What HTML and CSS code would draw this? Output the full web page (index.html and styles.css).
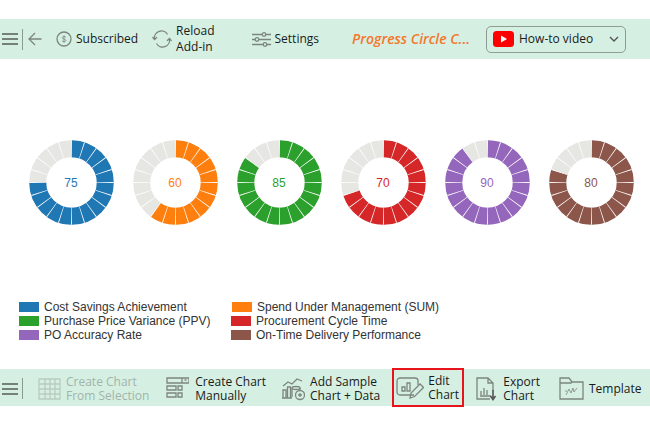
FILE: index.html
```html
<!doctype html>
<html>
    <head>
        <meta charset="utf-8"/>
        <title>Progress Circle Chart</title>
        <link rel="stylesheet" href="styles.css">
    </head>
    <body>
        <header class="bar top-bar">
            <svg class="ico menu-ico" width="16" height="14" viewBox="0 0 16 14"><path d="M0 2h16M0 7h16M0 12h16"/></svg>
            <span class="divider"></span>
            <svg class="ico back-ico" width="14" height="14" viewBox="0 0 14 14"><path d="M13.500 7H1M7 1L1 7l6 6"/></svg>
            <div class="tool subscribed">
                <svg class="ico" width="16" height="16" viewBox="0 0 16 16"><circle cx="8" cy="8" r="7"/><path class="thin" d="M10 6.200C9.500 5.300 6.200 5.200 6.200 6.700S10 8 10 9.500 6.500 11 6 9.800M8 4.300v7.400"/></svg>
                <span>Subscribed</span>
            </div>
            <div class="tool reload">
                <svg class="ico" width="20" height="18" viewBox="0 0 20 18"><path d="M2.500 9A7 7 0 0 1 15.500 4.500M17.500 9A7 7 0 0 1 4.500 13.500"/><path d="M0.500 7l2 2.500L5 7.200M19.500 11l-2-2.500L15 10.800"/></svg>
                <span>Reload<br>Add-in</span>
            </div>
            <div class="tool settings">
                <svg class="ico" width="19" height="15" viewBox="0 0 19 15"><path d="M0 2.500h10M14 2.500h5M0 7.500h3M7 7.500h12M0 12.500h11M15 12.500h4"/><circle cx="12" cy="2.500" r="1.800"/><circle cx="5" cy="7.500" r="1.800"/><circle cx="13" cy="12.500" r="1.800"/></svg>
                <span>Settings</span>
            </div>
            <p class="addin-title">Progress Circle C...</p>
            <div class="video-select">
                <svg width="21" height="16" viewBox="0 0 21 16"><rect width="21" height="16" rx="3.500" fill="#f00"/><path d="M8 4.500v7l6-3.500z" fill="#fff"/></svg>
                <span>How-to video</span>
                <svg class="ico chevron" width="10" height="6" viewBox="0 0 10 6"><path d="M1 1l4 4 4-4"/></svg>
            </div>
        </header>

        <main>
            <section class="charts">
                <figure class="donut blue">
                    <svg viewBox="0 0 85 85"><circle class="track" cx="42.500" cy="42.500" r="33.750" pathLength="100"/><circle class="value" cx="42.500" cy="42.500" r="33.750" pathLength="100" stroke-dasharray="75 25"/><circle class="seps" cx="42.500" cy="42.500" r="33.750" pathLength="100"/></svg>
                    <figcaption>75</figcaption>
                </figure>
                <figure class="donut orange">
                    <svg viewBox="0 0 85 85"><circle class="track" cx="42.500" cy="42.500" r="33.750" pathLength="100"/><circle class="value" cx="42.500" cy="42.500" r="33.750" pathLength="100" stroke-dasharray="60 40"/><circle class="seps" cx="42.500" cy="42.500" r="33.750" pathLength="100"/></svg>
                    <figcaption>60</figcaption>
                </figure>
                <figure class="donut green">
                    <svg viewBox="0 0 85 85"><circle class="track" cx="42.500" cy="42.500" r="33.750" pathLength="100"/><circle class="value" cx="42.500" cy="42.500" r="33.750" pathLength="100" stroke-dasharray="85 15"/><circle class="seps" cx="42.500" cy="42.500" r="33.750" pathLength="100"/></svg>
                    <figcaption>85</figcaption>
                </figure>
                <figure class="donut red">
                    <svg viewBox="0 0 85 85"><circle class="track" cx="42.500" cy="42.500" r="33.750" pathLength="100"/><circle class="value" cx="42.500" cy="42.500" r="33.750" pathLength="100" stroke-dasharray="70 30"/><circle class="seps" cx="42.500" cy="42.500" r="33.750" pathLength="100"/></svg>
                    <figcaption>70</figcaption>
                </figure>
                <figure class="donut purple">
                    <svg viewBox="0 0 85 85"><circle class="track" cx="42.500" cy="42.500" r="33.750" pathLength="100"/><circle class="value" cx="42.500" cy="42.500" r="33.750" pathLength="100" stroke-dasharray="90 10"/><circle class="seps" cx="42.500" cy="42.500" r="33.750" pathLength="100"/></svg>
                    <figcaption>90</figcaption>
                </figure>
                <figure class="donut brown">
                    <svg viewBox="0 0 85 85"><circle class="track" cx="42.500" cy="42.500" r="33.750" pathLength="100"/><circle class="value" cx="42.500" cy="42.500" r="33.750" pathLength="100" stroke-dasharray="80 20"/><circle class="seps" cx="42.500" cy="42.500" r="33.750" pathLength="100"/></svg>
                    <figcaption>80</figcaption>
                </figure>
            </section>

            <ul class="legend">
                <li class="blue"><i></i>Cost Savings Achievement</li>
                <li class="orange nudge"><i></i>Spend Under Management (SUM)</li>
                <li class="green"><i></i>Purchase Price Variance (PPV)</li>
                <li class="red"><i></i>Procurement Cycle Time</li>
                <li class="purple"><i></i>PO Accuracy Rate</li>
                <li class="brown"><i></i>On-Time Delivery Performance</li>
            </ul>
        </main>

        <footer class="bar bottom-bar">
            <svg class="ico menu-ico" width="16" height="14" viewBox="0 0 16 14"><path d="M0 2h16M0 7h16M0 12h16"/></svg>
            <span class="divider"></span>
            <div class="tool from-selection disabled">
                <svg class="ico" width="23" height="24" viewBox="0 0 23 24"><path d="M1 2h21v20H1zM1 7h21M1 12h21M1 17h21M7 2v20M12 2v20M17 2v20"/></svg>
                <span>Create Chart<br>From Selection</span>
            </div>
            <div class="tool manually">
                <svg class="ico" width="23" height="24" viewBox="0 0 23 24"><path d="M1 1h22v5H1zM16 1v5M18.500 3h2M1 9h9v4H1zM1 16h9v4H1zM12 9h4v4h-4zM12 16h4v4h-4z"/></svg>
                <span>Create Chart<br>Manually</span>
            </div>
            <div class="tool sample">
                <svg class="ico" width="24" height="24" viewBox="0 0 24 24"><path d="M2 9l5-4 4 2 5-5 5 2M1 21h10M2 13h3v8H2zM6.500 10h3v11h-3z"/><ellipse cx="15" cy="11" rx="4" ry="1.500"/><path d="M11 11v9M19 11v2"/><circle cx="19" cy="18" r="4.500"/><path d="M17 18h4M19 16v4"/></svg>
                <span>Add Sample<br>Chart + Data</span>
            </div>
            <div class="tool edit-chart">
                <svg class="ico" width="28" height="24" viewBox="0 0 28 24"><path d="M18 19H4a3 3 0 0 1-3-3V5a3 3 0 0 1 3-3h15a3 3 0 0 1 3 3v4"/><path d="M6 15v-4h3v4zM11 15V7h3v8z"/><path d="M14 22l1-5 9-9 3.500 3.500-9 9z"/></svg>
                <span>Edit<br>Chart</span>
            </div>
            <div class="tool export">
                <svg class="ico" width="21" height="24" viewBox="0 0 21 24"><path d="M14 22H1V1h11l5 5v8M12 1v5h5"/><path d="M4 19h11M5 18v-4M8 18v-7M11 18v-5"/><path class="heavy" d="M17 13v9M14.500 19l2.500 3.500 2.500-3.500"/></svg>
                <span>Export<br>Chart</span>
            </div>
            <div class="tool template">
                <svg class="ico" width="25" height="25" viewBox="0 0 25 25"><path d="M1 23V2h9l3 4h11v17zM1 7h11l1-1"/><path class="thin" d="M7 19l3-6 2 4 2-5 1 4 3-4M6 15h2"/></svg>
                <span>Template</span>
            </div>
        </footer>
    </body>
</html>
```

FILE: styles.css
```css
* {
    margin: 0;
    padding: 0;
    box-sizing: border-box;
}
body {
    font-family: "Open Sans", "Liberation Sans", sans-serif;
    background-color: #fff;
    color: #1a1a1a;
    width: 650px;
    height: 426px;
    overflow: hidden;
    padding-top: 19px;
}
.bar {
    display: flex;
    align-items: center;
    background-color: #d5f0e2;
    font-size: 12px;
    white-space: nowrap;
    padding-left: 2px;
}
.top-bar {
    height: 40px;
    line-height: 16px;
}
.bottom-bar {
    height: 37px;
    margin-top: 27px;
    padding-top: 2px;
    line-height: 14px;
}
.bottom-bar .tool span {
    padding-top: 1px;
}
.ico {
    flex: none;
    fill: none;
    stroke: #7d857f;
    stroke-width: 1.300;
}
.ico .thin {
    stroke-width: .8;
}
.ico .heavy {
    stroke-width: 1.600;
    stroke: #555;
}
.menu-ico {
    stroke: #555b57;
    stroke-width: 1.600;
}
.divider {
    width: 1px;
    height: 21px;
    background-color: #8b9a90;
    margin-left: 4px;
}
.back-ico {
    margin-left: 5px;
}
.tool {
    display: flex;
    align-items: center;
}
.subscribed {
    margin-left: 14px;
    gap: 4px;
}
.reload {
    margin-left: 14px;
    gap: 4px;
}
.settings {
    margin-left: 37px;
    gap: 4px;
}
.addin-title {
    margin-left: 33px;
    width: 134px;
    color: #f5762e;
    font-style: italic;
    font-weight: 600;
    font-size: 14px;
}
.video-select {
    display: flex;
    align-items: center;
    width: 140px;
    height: 27px;
    border: 1px solid #8e9c92;
    border-radius: 5px;
    padding: 0 6px 0 6px;
}
.video-select span {
    margin-left: 5px;
    flex: 1;
}
.chevron {
    stroke: #555;
    stroke-width: 1.400;
}
.charts {
    display: flex;
    margin-top: 81px;
    padding-left: 19px;
}
.donut {
    position: relative;
    width: 104px;
    height: 85px;
    display: flex;
    justify-content: center;
    align-items: center;
}
.donut svg {
    position: absolute;
    top: 0;
    left: 9.500px;
    width: 85px;
    height: 85px;
    transform: rotate(-90deg);
}
.donut circle {
    fill: none;
    stroke-width: 17;
}
.donut .track {
    stroke: #e6e6e3;
}
.donut .value {
    stroke: var(--c);
}
.donut .seps {
    stroke: #fff;
    stroke-dasharray: .35 4.650;
    stroke-dashoffset: .175;
}
.donut figcaption {
    position: relative;
    font-family: "Liberation Sans", Arial, sans-serif;
    font-size: 12px;
    color: var(--c);
}
.blue { --c: #1f77b4; }
.orange { --c: #ff7f0e; }
.green { --c: #2ca02c; }
.red { --c: #d62728; }
.purple { --c: #9467bd; }
.brown { --c: #8c564b; }
.legend {
    list-style: none;
    display: grid;
    grid-template-columns: 212px auto;
    margin-top: 75px;
    padding-left: 19px;
    font-family: "Liberation Sans", Arial, sans-serif;
    font-size: 12px;
    line-height: 14px;
    color: #333;
}
.legend li {
    display: flex;
    align-items: center;
    white-space: nowrap;
}
.legend i {
    width: 20px;
    height: 10px;
    margin-right: 5px;
    background-color: var(--c);
}
.legend .nudge {
    margin-left: 1px;
}
.disabled {
    color: #a3b3aa;
}
.disabled .ico {
    stroke: #b9cbbf;
}
.from-selection {
    margin-left: 15px;
    gap: 5px;
}
.manually {
    margin-left: 17px;
    gap: 6px;
}
.sample {
    margin-left: 15px;
    gap: 5px;
}
.edit-chart {
    margin-left: 12px;
    margin-top: -2px;
    width: 72px;
    height: 39px;
    padding-left: 2px;
    gap: 4px;
    border: 2px solid #e8141c;
}
.export {
    margin-left: 12px;
    gap: 6px;
}
.template {
    margin-left: 19px;
    gap: 5px;
}
```
